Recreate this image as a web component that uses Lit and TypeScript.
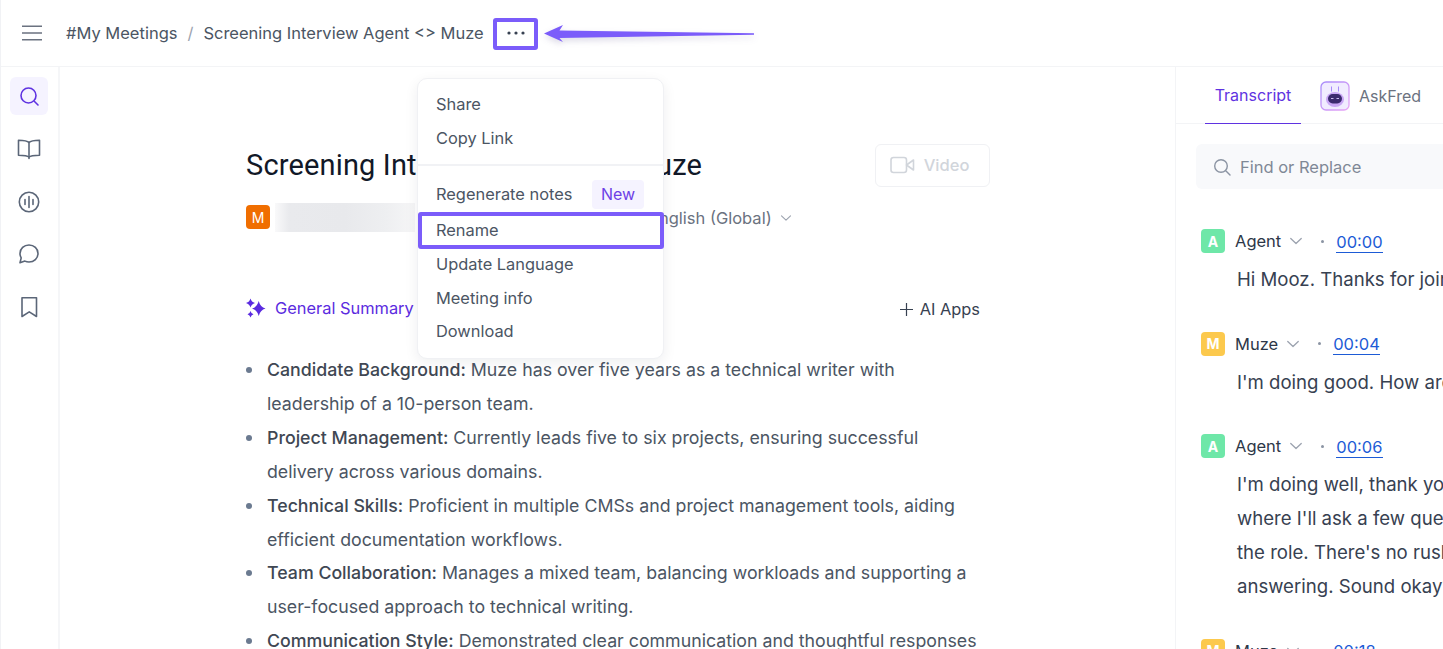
import { LitElement, html, css } from "lit";
import { customElement } from "lit/decorators.js";

const bullets: [string, string, string][] = [
  ["Candidate Background:", " Muze has over five years as a technical writer with", "leadership of a 10-person team."],
  ["Project Management:", " Currently leads five to six projects, ensuring successful", "delivery across various domains."],
  ["Technical Skills:", " Proficient in multiple CMSs and project management tools, aiding", "efficient documentation workflows."],
  ["Team Collaboration:", " Manages a mixed team, balancing workloads and supporting a", "user-focused approach to technical writing."],
  ["Communication Style:", " Demonstrated clear communication and thoughtful responses", "throughout the interview."],
];

const entries = [
  { n: "Agent", c: "green", t: "00:00", lines: ["Hi Mooz. Thanks for joining today."] },
  { n: "Muze", c: "yellow", t: "00:04", lines: ["I'm doing good. How are you?"] },
  { n: "Agent", c: "green", t: "00:06", lines: ["I'm doing well, thank you for asking. This is a screening", "where I'll ask a few questions about your background and", "the role. There's no rush, so take your time when", "answering. Sound okay?"] },
  { n: "Muze", c: "yellow", t: "00:18", lines: ["Sounds good."] },
];

const chevron = html`<svg class="chev" viewBox="0 0 12 12" fill="none" stroke="currentColor" stroke-width="1.1" stroke-linecap="round" stroke-linejoin="round"><path d="M1.5 3.8 6 8.2l4.5-4.4"/></svg>`;

@customElement("app-root")
export class AppRoot extends LitElement {
  static styles = css`
    :host { display: block; width: 1443px; height: 649px; overflow: hidden; position: relative; background: #fff; font-family: Inter, "Liberation Sans", sans-serif; color: #374151; }
    * { box-sizing: border-box; }
    .page { height: 649px; display: flex; flex-direction: column; border-left: 1px solid #f1f2f5; }
    header { height: 67px; flex: none; display: flex; align-items: center; padding-left: 21px; border-bottom: 1px solid #f3f4f6; color: #4b5563; font-size: 16.5px; }
    .burger { width: 20px; height: 16px; margin-right: 24px; color: #6b7280; display: block; }
    .sep { color: #9ca3af; margin: 0 10px; }
    .dots { margin-left: 22px; width: 20px; height: 6px; color: #374151; display: block; }
    .body { flex: 1; min-height: 0; display: flex; }
    nav { width: 59px; flex: none; border-right: 2px solid #f5f6f8; padding: 10px 0 0 9px; display: flex; flex-direction: column; gap: 14.8px; }
    .nav-btn { width: 38px; height: 38px; border-radius: 6px; display: flex; align-items: center; justify-content: center; color: #5b6678; }
    .nav-btn.on { background: #f5f3ff; color: #5f33e1; }
    .nav-btn svg { width: 24px; height: 24px; }
    main { flex: 1; min-width: 0; padding: 77px 0 0 186px; overflow: hidden; }
    .doc { width: 744px; }
    .title-row { display: flex; align-items: center; justify-content: space-between; height: 42px; }
    h1 { margin: 0; font-family: Roboto, Inter, sans-serif; font-weight: 400; font-size: 29px; color: #111827; letter-spacing: 0.16px; white-space: nowrap; }
    .video { width: 115px; height: 43px; padding-right: 6px; border: 1px solid #f0f1f4; border-radius: 6px; display: flex; align-items: center; justify-content: center; gap: 9px; color: #d1d5db; font-size: 16.5px; font-weight: 500; }
    .video svg { width: 25px; height: 18px; }
    .meta { display: flex; align-items: center; margin-top: 16px; height: 30px; color: #6b7280; font-size: 16.5px; }
    .av { width: 24px; height: 24px; border-radius: 4px; color: #fff; font-size: 14px; font-weight: 400; display: flex; align-items: center; justify-content: center; flex: none; }
    .orange { background: #f06e00; }
    .green { background: #6ee7a8; font-weight: 700; }
    .yellow { background: #fcc94d; font-weight: 700; }
    .blur { width: 140px; height: 29px; margin-left: 5px; background: linear-gradient(90deg, #f9f9fa 0, #e9eaed 10%, #e8e9ec 50%, #eeeff1 80%, #f6f6f7 100%); }
    .lang { margin-left: 234px; padding-top: 2px; white-space: nowrap; }
    .meta .chev { width: 12px; height: 12px; margin: 2px 0 0 8px; color: #9ca3af; }
    .sum-row { display: flex; align-items: center; justify-content: space-between; margin-top: 61px; height: 30px; }
    .sum { display: flex; align-items: center; gap: 9px; color: #5b2be0; font-size: 16.4px; white-space: nowrap; }
    .sum svg { width: 20px; height: 20px; }
    .apps { display: flex; align-items: center; gap: 6px; padding: 2px 10px 0 0; font-size: 16.4px; color: #374151; }
    .apps svg { width: 15px; height: 15px; }
    ul { margin: 30px 0 0; padding: 0; list-style: none; font-size: 17.75px; line-height: 33.9px; color: #4b5563; }
    li { display: flex; gap: 15px; }
    .dot { width: 6px; height: 6px; border-radius: 50%; background: #6b7a90; margin-top: 14px; flex: none; }
    li span { display: block; white-space: nowrap; }
    li b { font-weight: 500; color: #404753; }
    aside { width: 268px; flex: none; border-left: 1px solid #f3f4f6; overflow: hidden; }
    .tabs { height: 57px; display: flex; border-bottom: 1px solid #f3f4f6; padding-left: 29px; position: relative; }
    .tab { height: 57px; display: flex; align-items: center; font-size: 16px; white-space: nowrap; color: #5f33e1; width: 96px; justify-content: center; border-bottom: 1px solid #5f33e1; }
    .fred { display: flex; align-items: center; margin-left: 19px; gap: 9px; color: #6b7280; font-size: 16px; height: 57px; }
    .fred svg { width: 30px; height: 30px; }
    .search { margin: 20px 0 0 20px; width: 300px; height: 45px; border-radius: 6px; background: #f8f9fb; display: flex; align-items: center; padding-left: 17px; gap: 9px; color: #7f8896; font-size: 16.5px; white-space: nowrap; }
    .search svg { width: 18px; height: 18px; color: #8b94a3; flex: none; }
    .entries { margin: 40px 0 0 25px; display: flex; flex-direction: column; gap: 35.5px; }
    .head { display: flex; align-items: center; height: 24px; font-size: 16.5px; color: #2d3748; white-space: nowrap; }
    .name { margin-left: 10px; }
    .head .chev { width: 14px; height: 14px; margin-left: 8px; color: #9ca3af; }
    .pt { width: 3px; height: 3px; border-radius: 50%; background: #8b94a3; margin: 0 12px 0 18px; }
    .time { color: #1d5bd6; border-bottom: 1px solid #1d5bd6; line-height: 20px; margin-top: 2px; }
    .lines { margin: 9px 0 0 36px; font-size: 18.6px; line-height: 34px; color: #374151; white-space: nowrap; }
    .menu { position: absolute; left: 417px; top: 78px; width: 247px; height: 281px; background: #fff; border: 1px solid #f0f1f4; border-radius: 10px; box-shadow: 0 4px 14px rgba(17,24,39,.07); padding-top: 8px; font-size: 16.4px; color: #4b5563; }
    .mi { height: 34px; display: flex; align-items: center; justify-content: space-between; padding: 0 19px 0 18px; white-space: nowrap; }
    .mi.last { margin-top: -1px; }
    .mdiv { height: 2px; background: #f1f2f5; margin: 9px 0 11px; }
    .new { width: 52px; height: 29px; border-radius: 4px; background: #f5f3ff; color: #6d3fe6; display: flex; align-items: center; justify-content: center; font-size: 16px; }
    .mi.r { margin-top: 2px; }
    .mark { position: absolute; border: 4px solid #7b5cfa; pointer-events: none; }
    .m1 { left: 493px; top: 18px; width: 45px; height: 32px; border-radius: 3px; }
    .m2 { left: 418px; top: 212px; width: 246px; height: 37px; border-radius: 3px; }
    .arrow { position: absolute; left: 540px; top: 20px; width: 220px; height: 26px; filter: drop-shadow(0 3px 3px rgba(60,50,120,.18)); }
  `;

  render() {
    return html`
      <div class="page">
        <header>
          <svg class="burger" viewBox="0 0 20 16" fill="none" stroke="currentColor" stroke-width="1.6"><path d="M0 1.2h20M0 8h20M0 14.8h20"/></svg>
          <span>#My Meetings</span><span class="sep">/</span><span>Screening Interview Agent &lt;&gt; Muze</span>
          <svg class="dots" viewBox="0 0 20 6" fill="currentColor"><circle cx="3" cy="3" r="1.6"/><circle cx="10" cy="3" r="1.6"/><circle cx="17" cy="3" r="1.6"/></svg>
        </header>
        <div class="body">
          <nav>
            <div class="nav-btn on"><svg viewBox="0 0 24 24" fill="none" stroke="currentColor" stroke-width="1.6" stroke-linecap="round"><circle cx="11.5" cy="11.5" r="7.5"/><path d="m17.5 17.5 3.5 3.5"/></svg></div>
            <div class="nav-btn"><svg viewBox="0 0 24 24" fill="none" stroke="currentColor" stroke-width="1.6" stroke-linejoin="round" stroke-linecap="round"><path d="M12 5.5C10.5 3.8 8 3.2 1.5 3.2v15c6 0 9 .3 10.500 1.800 1.500-1.500 4.500-1.800 10.500-1.800v-15c-6.500 0-9 .6-10.500 2.300Z"/><path d="M12 5.500V21.500"/></svg></div>
            <div class="nav-btn"><svg viewBox="0 0 24 24" fill="none" stroke="currentColor" stroke-width="1.600" stroke-linecap="round"><circle cx="12" cy="12" r="9.700"/><path d="M12 6.500v11M8 9.500v5M16 9.500v5"/></svg></div>
            <div class="nav-btn"><svg viewBox="0 0 24 24" fill="none" stroke="currentColor" stroke-width="1.600" stroke-linejoin="round"><path d="M12 3c5 0 9 3.700 9 8.500S17 20 12 20c-1.500 0-2.900-.3-4.100-.9L3 20.800l1.200-4.900A8.200 8.200 0 0 1 3 11.500C3 6.700 7 3 12 3Z"/></svg></div>
            <div class="nav-btn"><svg viewBox="0 0 24 24" fill="none" stroke="currentColor" stroke-width="1.600" stroke-linejoin="round"><path d="M5 2.800h14.500v18.700l-7.250-4.600L5 21.500Z"/></svg></div>
          </nav>
          <main>
            <div class="doc">
              <div class="title-row">
                <h1>Screening Interview Agent &lt;&gt; Muze</h1>
                <div class="video"><svg viewBox="0 0 25 18" fill="none" stroke="currentColor" stroke-width="1.600" stroke-linejoin="round"><rect x="1" y="1.500" width="15.500" height="15" rx="2.500"/><path d="m16.500 9 7-5v10Z"/></svg>Video</div>
              </div>
              <div class="meta">
                <div class="av orange">M</div><div class="blur"></div>
                <span class="lang">English (Global)</span>${chevron}
              </div>
              <div class="sum-row">
                <div class="sum"><svg viewBox="0 0 20 20" fill="currentColor"><path d="M12.700 3 Q14.200 9 19.500 10.500 Q14.200 12 12.700 18 Q11.200 12 6 10.500 Q11.200 9 12.700 3Z"/><path d="M4.500 .5 Q5.400 4 9 5 Q5.400 6 4.500 9.500 Q3.600 6 0 5 Q3.600 4 4.500 .5Z"/><path d="M4.500 13 Q5.100 15.600 7.500 16.300 Q5.100 17 4.500 19.500 Q3.900 17 1.500 16.300 Q3.900 15.600 4.500 13Z"/></svg>General Summary</div>
                <div class="apps"><svg viewBox="0 0 15 15" fill="none" stroke="currentColor" stroke-width="1.200"><path d="M7.500 1v13M1 7.500h13"/></svg>AI Apps</div>
              </div>
              <ul>
                ${bullets.map(b => html`<li><i class="dot"></i><div><span><b>${b[0]}</b>${b[1]}</span><span>${b[2]}</span></div></li>`)}
              </ul>
            </div>
          </main>
          <aside>
            <div class="tabs">
              <div class="tab">Transcript</div>
              <div class="fred">
                <svg viewBox="0 0 30 30"><defs><linearGradient id="g" x1="0" y1="0" x2="1" y2="1"><stop offset="0" stop-color="#a78bfa"/><stop offset="1" stop-color="#e9a5f5"/></linearGradient></defs>
                  <rect x="1" y="1" width="28" height="28" rx="5" fill="#f1ecff" stroke="url(#g)" stroke-width="1.300"/>
                  <path d="M11.500 5.500v5M18.500 5.500v5" stroke="#a78bfa" stroke-width="1"/>
                  <ellipse cx="15" cy="18.500" rx="9" ry="7.500" fill="#c9a7f5"/>
                  <rect x="8" y="13" width="14" height="9.500" rx="4.700" fill="#3b2a6e"/>
                  <path d="M11 17.500h2.500M16.500 17.500H19" stroke="#c9b8ef" stroke-width="1"/>
                </svg>AskFred
              </div>
            </div>
            <div class="search"><svg viewBox="0 0 18 18" fill="none" stroke="currentColor" stroke-width="1.400" stroke-linecap="round"><circle cx="8" cy="8" r="6.300"/><path d="m13 13 4 4"/></svg>Find or Replace</div>
            <div class="entries">
              ${entries.map(e => html`<div>
                <div class="head"><div class="av ${e.c}">${e.n[0]}</div><span class="name">${e.n}</span>${chevron}<span class="pt"></span><span class="time">${e.t}</span></div>
                <div class="lines">${e.lines.map(l => html`<div>${l}</div>`)}</div>
              </div>`)}
            </div>
          </aside>
        </div>
      </div>
      <div class="menu">
        <div class="mi">Share</div>
        <div class="mi">Copy Link</div>
        <div class="mdiv"></div>
        <div class="mi">Regenerate notes<span class="new">New</span></div>
        <div class="mi r">Rename</div>
        <div class="mi">Update Language</div>
        <div class="mi">Meeting info</div>
        <div class="mi last">Download</div>
      </div>
      <div class="mark m1"></div>
      <div class="mark m2"></div>
      <svg class="arrow" viewBox="0 0 220 26" fill="#7b5cfa"><path d="M4 13.500 23 5l-3.500 5.500L214 13.300v1.500L19.500 18l3.500 4Z"/></svg>
    `;
  }
}
